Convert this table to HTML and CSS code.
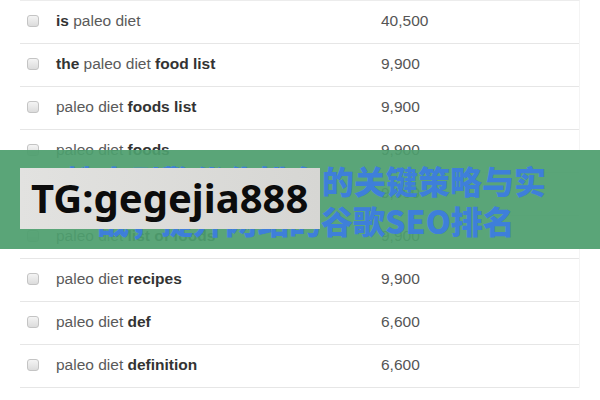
FILE: index.html
```html
<!DOCTYPE html>
<html lang="en">
<head>
  <meta charset="UTF-8" />
  <title>Keyword ideas</title>
  <link rel="stylesheet" href="styles.css">
</head>
<body>

  <!-- Lista de palavras-chave -->
  <section class="keyword-list">
    <div class="row">
      <span class="check"></span>
      <span class="keyword"><b>is</b> paleo diet</span>
      <span class="volume">40,500</span>
    </div>
    <div class="row">
      <span class="check"></span>
      <span class="keyword"><b>the</b> paleo diet <b>food list</b></span>
      <span class="volume">9,900</span>
    </div>
    <div class="row">
      <span class="check"></span>
      <span class="keyword">paleo diet <b>foods list</b></span>
      <span class="volume">9,900</span>
    </div>
    <div class="row">
      <span class="check"></span>
      <span class="keyword">paleo diet <b>foods</b></span>
      <span class="volume">9,900</span>
    </div>
    <div class="row">
      <span class="check"></span>
      <span class="keyword">paleo diet <b>food</b></span>
      <span class="volume">9,900</span>
    </div>
    <div class="row">
      <span class="check"></span>
      <span class="keyword">paleo diet <b>list of foods</b></span>
      <span class="volume">9,900</span>
    </div>
    <div class="row">
      <span class="check"></span>
      <span class="keyword">paleo diet <b>recipes</b></span>
      <span class="volume">9,900</span>
    </div>
    <div class="row">
      <span class="check"></span>
      <span class="keyword">paleo diet <b>def</b></span>
      <span class="volume">6,600</span>
    </div>
    <div class="row">
      <span class="check"></span>
      <span class="keyword">paleo diet <b>definition</b></span>
      <span class="volume">6,600</span>
    </div>
  </section>

  <!-- Faixa por cima da tabela -->
  <div class="banner">
    <p class="banner-title">搜索引擎优化排名的关键策略与实<br>战，提升网站的谷歌SEO排名</p>
    <div class="tag">TG:gegejia888</div>
  </div>

</body>
</html>
```

FILE: styles.css
```css
* {
  box-sizing: border-box;
  margin: 0;
  padding: 0;
}
body {
  background: #fff;
  font-family: 'Liberation Sans', Arial, sans-serif;
  color: #5a5a5a;
  width: 600px;
  height: 400px;
  overflow: hidden;
  position: relative;
}

/* Lista */
.keyword-list {
  margin-left: 20px;
  width: 560px;
  border-top: 1px solid #ececec;
  border-right: 1px solid #f4f4f4;
}
.row {
  display: flex;
  align-items: center;
  height: 43px;
  padding-bottom: 3px;
  border-bottom: 1px solid #e6e6e6;
  font-size: 15.5px;
}
.row b {
  color: #333;
}
.check {
  width: 12px;
  height: 12px;
  margin-left: 7px;
  margin-right: 17px;
  border: 1px solid #c4c4c4;
  border-radius: 3px;
  background: linear-gradient(#f4f4f4, #dcdcdc);
}
.keyword {
  width: 325px;
}
.volume {
  color: #555;
}

/* Faixa verde */
.banner {
  position: absolute;
  top: 150px;
  left: 0;
  width: 600px;
  height: 99px;
  background: rgba(78, 158, 110, 0.93);
}
.banner-title {
  padding-top: 10px;
  padding-left: 12px;
  text-align: center;
  font-family: 'Noto Sans CJK SC', sans-serif;
  font-weight: 900;
  font-size: 32px;
  line-height: 40px;
  color: #3d7de0;
  opacity: 0.95;
}
.tag {
  position: absolute;
  top: 18px;
  left: 20px;
  width: 300px;
  height: 61px;
  padding-left: 11px;
  background: linear-gradient(90deg, #e2e2e0, #d6d6d3);
  font-family: 'Noto Sans', sans-serif;
  font-weight: 700;
  font-size: 40px;
  line-height: 60px;
  color: #0c0c0c;
}
```
